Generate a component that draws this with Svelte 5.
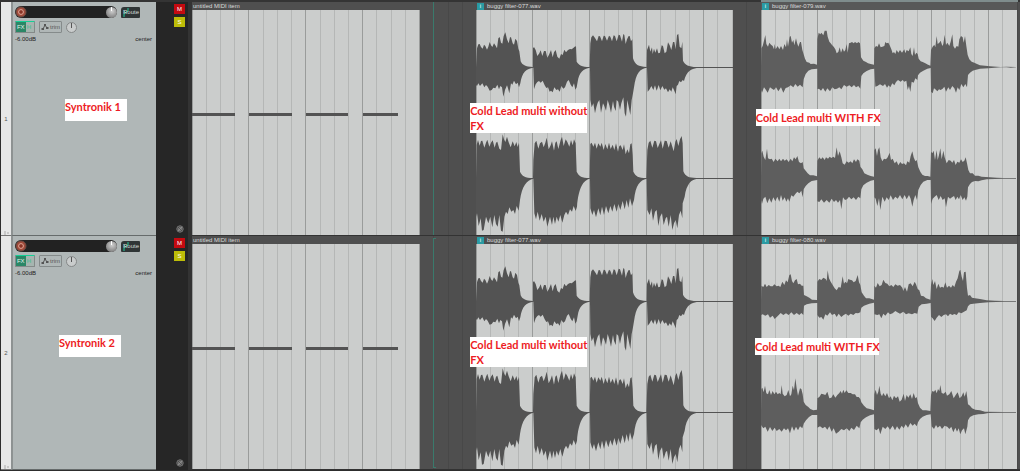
<script>
    // waveform outlines, three units to a pixel: upper edge left to right, then lower edge back
    const dry = {
        view: '138 30 771 675',
        start: 138,
        paths: [
            { shift: 0, d: 'M138 202L141 145 145 133 149 132 153 141 158 146 162 134 166 138 171 149 175 140 179 126 183 136 187 141 192 130 197 137 201 145 205 115 209 111 213 128 217 131 221 108 226 97 231 118 236 130 240 112 243 112 248 130 252 134 256 116 261 123 265 146 268 154 272 184C277 195 285 200 309 201L309 145 312 141 317 150 322 168 328 160 332 151 337 168 342 153 347 153 352 173 357 164 363 150 368 172 372 157 377 150 382 170 388 176 393 162 398 165 403 149 408 157 414 150 420 147 425 148 430 144 434 140 438 139 440 185C447 196 455 200 479 201L481 130 484 112 489 106 495 114 501 124 506 108 510 109 516 124 521 107 525 108 531 122 537 107 541 110 546 124 551 106 555 108 560 124 566 104 570 106 576 125 580 102 583 105 587 132 591 118 596 108 599 108 603 124 607 118 609 175C615 195 625 200 650 201L651 150 657 134 661 155 666 142 668 162 672 146 676 158 681 145 685 160 690 158 695 136 699 138 704 160 709 155 714 127 719 136 724 150 729 126 733 126 737 148 741 105 745 102 749 140 754 145 757 125 759 182C765 195 775 200 800 201L909 201 909 204 800 204C785 207 770 212 762 243L758 240 753 247 748 243 744 254 740 258 737 283 733 272 728 262 724 275 719 268 714 277 708 265 703 269 697 258 691 271 686 255 680 272 675 256 670 270 664 258 659 268 653 275 651 203C630 206 618 218 612 262L609 280 605 300 601 345 597 325 592 300 588 350 584 340 580 292 574 310 570 330 565 305 560 300 557 333 552 320 549 303 543 338 538 316 533 300 528 332 523 318 519 310 513 338 508 300 503 308 499 322 495 340 490 310 485 322 481 300 480 203C460 206 448 215 443 245L440 262 436 269 432 250 427 262 422 254 416 240 411 245 405 262 400 266 394 258 389 275 384 268 379 270 373 262 368 277 363 272 359 275 354 262 349 264 344 256 338 242 332 248 327 243 322 246 317 253 312 268 310 203C290 206 276 215 271 250L267 262 263 248 258 253 252 242 247 254 243 250 238 280 234 265 231 256 225 270 220 290 216 262 211 258 207 268 202 254 196 265 190 263 185 270 179 272 173 260 168 255 163 262 157 250 150 258 145 250 141 258 138 255Z' },
            { shift: 300, d: 'M138 235L140 135 144 120 149 137 153 123 157 122 163 143 168 128 172 119 178 140 183 128 188 121 194 143 198 128 202 125 208 146 213 150 218 103 222 118 226 126 231 110 236 127 242 142 248 124 254 139 259 126 263 141 267 128 270 215C276 228 285 234 309 234L310 180 314 130 319 122 325 146 330 130 336 125 341 142 346 128 350 113 356 148 362 136 366 124 372 152 376 128 380 124 385 147 392 120 396 110 401 138 407 118 412 126 418 140 423 120 428 136 432 118 437 130 440 215C447 229 455 234 479 234L481 132 485 128 490 140 495 128 500 146 505 130 511 140 515 128 521 150 526 132 532 148 537 128 542 147 548 134 553 150 558 130 564 155 568 138 572 136 578 150 582 133 587 163 592 148 597 160 601 133 605 130 608 165 610 215C617 229 625 234 649 234L652 150 656 128 661 122 667 143 673 122 678 124 683 144 688 132 693 121 698 146 704 122 710 123 716 143 722 124 727 140 731 154 736 125 740 117 745 138 750 118 755 108 758 130 760 214C766 229 776 234 799 234L909 234 909 237 799 237C785 239 770 250 764 290L758 310 757 355 752 332 747 345 742 385 737 360 732 370 727 390 722 345 716 380 711 350 707 355 701 375 696 340 690 350 685 378 680 330 675 335 669 362 664 325 659 345 652 330 650 236C630 240 617 255 612 300L606 318 600 295 595 323 590 300 584 328 578 303 571 330 565 312 560 335 553 312 547 335 541 318 535 340 528 318 522 345 516 320 511 346 505 325 498 352 492 330 487 345 481 325 480 236C460 240 446 262 441 320L437 333 431 318 426 335 420 328 414 345 408 335 403 345 397 368 391 345 385 365 380 350 375 372 370 350 366 375 360 350 352 380 347 350 341 365 335 342 329 362 323 335 318 358 313 340 310 236C290 240 276 258 270 300L266 332 260 318 255 342 250 330 244 335 238 322 233 342 228 335 223 350 218 395 213 392 208 345 203 380 198 372 193 345 187 382 181 350 175 370 168 350 161 390 156 392 152 355 146 378 141 340 138 350Z' }
        ]
    }

    const wet79 = {
        view: '63 30 768 675',
        start: 63,
        paths: [
            { shift: 0, d: 'M63 200L64 145 68 138 72 122 76 105 79 132 84 140 88 128 93 134 98 138 102 148 104 132 107 148 113 138 118 148 123 138 129 150 133 132 138 142 141 118 144 140 149 110 152 108 156 128 160 120 163 136 168 115 171 128 175 140 180 126 183 126 187 150 190 160 195 176 200 186 208 188 212 192 222 191 231 194L232 118 236 98 241 103 244 98 250 106 254 92 260 92 263 110 268 125 272 130 276 135 281 140 286 148 290 160 295 156 299 142 303 158 308 145 312 155 316 150 320 132 323 158 327 130 332 128 336 126 341 130 345 126 351 130 355 126 360 130 363 172 370 182 378 186 384 190 392 192 402 194L403 145 408 138 413 140 417 130 422 142 427 140 433 138 436 126 440 130 445 128 449 136 454 148 458 160 462 156 466 162 470 150 475 158 480 150 486 158 493 148 496 160 500 150 506 154 511 142 514 162 518 168 522 142 525 165 529 158 533 162 536 176 542 184 548 186 556 190 564 194 571 197L573 150 578 140 583 134 586 142 590 108 593 132 598 128 602 122 607 138 610 132 614 104 618 135 622 128 628 138 632 125 637 103 640 138 645 146 650 138 655 140 658 118 663 108 668 112 671 128 675 108 679 138 683 165 688 178 695 185 703 188 711 192 720 196 735 197 750 199 770 200 782 201 800 200 828 201L828 202 812 203 800 202 782 202 745 205 720 206 705 210 698 212 690 218 684 225L681 262 676 252 670 262 664 252 658 270 653 262 648 278 643 265 637 258 630 270 625 262 618 275 613 260 608 266 602 270 597 268 592 274 586 268 582 265 578 280 573 275 572 204 562 206 550 212 540 218 534 226L532 240 526 235 521 248 515 245 511 276 507 258 503 270 499 242 493 245 488 240 482 245 474 240 468 246 463 256 457 250 451 262 446 256 441 263 435 252 429 258 420 253 412 258 406 260 403 206 392 208 380 213 370 220 364 228L361 266 355 258 348 262 342 255 335 262 328 256 320 260 312 255 304 268 298 262 291 266 284 268 277 262 270 274 262 265 256 275 249 264 243 272 237 266 232 268L232 206 215 208 205 212 197 222 191 238L188 262 180 254 173 260 166 252 160 262 152 256 144 262 137 264 130 278 123 262 115 274 108 262 102 270 96 266 90 262 83 278 78 270 72 262 66 278 63 270Z' },
            { shift: 300, d: 'M63 234L64 160 67 152 71 170 76 180 81 146 84 175 90 178 95 176 101 186 106 176 113 184 118 176 123 184 129 176 134 182 140 178 146 186 152 176 157 184 162 172 167 178 172 168 177 186 183 190 188 186 191 205 197 212 203 220 210 226 220 226 231 229L232 182 238 172 243 178 248 172 254 180 258 172 264 176 269 170 274 174 280 170 285 174 290 142 294 168 299 154 304 172 308 190 314 194 320 184 326 188 332 184 337 190 342 178 348 186 352 178 358 182 361 200 367 208 373 220 382 224 392 228 402 230L403 150 407 145 411 168 414 150 418 142 422 172 427 184 432 176 438 178 443 172 449 158 453 180 458 176 464 190 470 184 475 196 481 186 486 192 492 190 498 196 502 184 508 188 512 168 517 154 521 172 526 184 530 180 535 202 541 215 547 224 555 228 563 228 571 230L573 155 577 160 581 152 585 180 590 150 593 180 597 165 601 145 605 178 610 152 614 172 620 190 626 180 632 182 637 188 642 180 647 195 652 185 658 188 663 178 668 186 673 182 677 172 681 190 685 210 690 220 698 220 705 227 715 227 725 230 750 232 770 233 790 234 828 234L828 236 790 236 765 237 740 238 725 241 715 244 705 243 696 246 690 252 684 262L682 290 678 302 673 292 668 300 662 285 657 298 652 290 647 300 642 288 636 292 630 296 624 290 618 322 614 295 608 300 602 288 596 300 590 285 584 290 578 296 573 312 572 240 562 240 550 245 542 255 535 270L531 300 526 285 521 300 517 320 512 296 507 285 500 298 494 285 487 298 480 285 473 296 466 290 459 300 452 286 446 300 440 292 434 305 427 290 421 330 417 295 412 318 407 296 403 292 402 240 392 242 380 248 370 256 364 268L361 295 355 290 348 300 341 292 334 298 327 290 321 298 315 300 309 292 304 328 300 300 294 308 288 300 282 306 275 296 268 308 260 300 252 308 244 298 238 306 232 304L232 240 215 243 205 250 197 258 191 268L188 292 184 272 178 280 172 275 166 282 160 290 154 286 148 305 144 295 139 305 134 292 128 302 123 285 118 305 112 290 106 304 100 292 94 308 88 295 82 310 76 290 70 296 66 312 63 300Z' }
        ]
    }

    const wet80 = {
        view: '63 27 768 675',
        start: 63,
        paths: [
            { shift: 0, d: 'M63 198L64 152 70 156 75 146 80 156 86 150 92 154 98 154 103 148 110 154 116 152 121 156 127 140 133 150 138 136 143 142 148 120 152 118 156 138 160 145 165 136 170 132 174 148 180 146 185 152 190 152 192 180 200 184 208 188 216 194 231 195L232 140 238 132 244 135 250 128 257 132 260 138 263 106 267 130 272 140 278 150 284 160 290 166 296 156 302 158 308 124 312 146 316 140 321 145 325 132 330 134 336 136 341 142 347 138 353 120 357 142 361 150 365 172 372 182 378 190 388 190 402 194L403 152 408 158 413 144 419 154 425 150 430 134 436 144 442 146 448 154 454 150 460 156 466 148 473 152 480 150 487 158 490 168 495 156 501 170 506 148 512 145 518 154 524 140 528 148 533 162 538 166 543 182 551 184 558 190 571 194L573 150 577 132 580 150 585 138 590 162 595 146 600 158 606 155 611 158 616 142 621 158 627 152 633 158 638 150 643 156 648 140 653 130 658 108 661 104 665 125 669 138 672 112 677 110 681 160 684 182 690 180 696 188 705 190 720 192 740 196 765 197 793 198 828 198L828 200 793 200 745 202 720 204 700 206 690 208 684 214L680 226 672 230 664 235 656 232 650 240 643 237 637 240 630 236 624 244 618 238 611 240 604 246 597 240 590 248 584 258 578 250 573 245 572 204 560 206 545 208 536 215L532 236 524 234 516 238 506 235 498 238 490 230 480 236 472 232 466 228 458 235 450 238 444 232 436 242 430 236 424 250 418 238 412 240 403 238 402 203 388 206 372 212 364 218L361 232 354 235 347 234 340 240 332 236 325 242 318 236 311 240 304 246 296 236 290 246 284 236 276 240 270 232 262 242 256 238 250 254 244 246 238 248 232 240L232 204 215 205 200 208 192 212L190 240 184 234 178 240 170 234 162 240 154 232 146 240 138 235 130 240 122 234 114 242 104 252 98 242 90 248 84 238 76 242 68 238 63 240Z' },
            { shift: 0, d: 'M63 531L64 462 67 458 71 472 75 452 79 475 84 478 88 465 93 480 98 468 103 478 108 470 113 478 118 474 122 478 125 450 128 476 134 484 140 480 145 465 150 484 154 478 158 452 162 466 166 430 170 460 174 482 180 460 184 462 188 478 191 500 197 510 205 516 211 522 220 526 231 524L232 490 238 486 244 476 250 478 256 480 262 470 268 490 274 488 280 478 286 488 292 480 298 474 302 468 306 476 310 464 314 474 319 466 325 474 332 474 338 478 345 478 350 486 356 486 361 492 364 502 372 512 380 520 390 522 402 526L403 478 407 464 411 480 415 470 418 452 422 476 426 484 430 474 436 484 441 474 447 490 452 484 457 496 462 482 468 490 474 484 479 500 485 494 491 476 495 498 500 480 505 488 511 478 516 492 521 474 526 490 530 486 534 505 540 518 548 526 558 526 571 528L573 480 577 468 582 470 586 464 590 475 594 462 598 468 601 450 605 474 611 476 617 470 621 482 628 478 634 468 641 490 647 480 653 472 659 490 665 484 670 472 674 485 679 468 682 490 684 508 690 512 696 520 706 524 720 526 735 530 793 531 828 531L828 533 793 533 745 534 730 537 715 538 700 541 690 546 684 556L682 575 676 598 672 580 666 586 661 598 656 580 651 590 646 578 640 592 634 575 628 582 622 575 614 572 606 582 600 572 593 578 588 570 582 582 575 574 572 538 560 540 548 545 540 552 534 562L530 574 524 566 518 572 511 564 504 578 497 568 491 580 485 572 478 584 471 574 465 586 458 572 450 584 443 574 436 582 428 575 421 598 416 580 410 586 403 582 402 538 390 541 378 547 368 554 362 562L358 580 350 572 342 585 334 578 328 588 320 580 312 586 304 582 296 590 288 596 281 580 275 590 268 574 262 584 255 575 248 580 240 574 232 578L232 540 216 540 207 546 198 556 191 566L187 580 180 574 174 586 168 575 162 588 156 574 150 595 144 580 138 586 132 580 125 590 118 582 110 588 104 578 97 588 90 576 83 590 76 575 70 580 63 570Z' }
        ]
    }

    const midi = [[0, 43], [57, 43], [114, 42], [171, 35]]

    // one beat of the arrange grid, in pixels of an 828 wide timeline
    const beat = 14.225

    const tracks = [
        { id: 1, name: 'Syntronik 1', dryFile: 'buggy filter-077.wav', wetFile: 'buggy filter-079.wav', wet: wet79 },
        { id: 2, name: 'Syntronik 2', dryFile: 'buggy filter-077.wav', wetFile: 'buggy filter-080.wav', wet: wet80 }
    ]

    let mix = $state([
        { mute: true, solo: true, volume: 100, pan: 50 },
        { mute: true, solo: true, volume: 100, pan: 50 }
    ])
</script>

{#snippet grid(count, start, step, height)}
    {#each { length: count } as _, i}
        <line class={i % 4 ? 'beat' : 'bar'} x1={start + i * step} x2={start + i * step} y1="0" y2={height} />
    {/each}
{/snippet}

{#snippet audio(file, wave, kind)}
    <section class="item {kind}">
        <header><i>i</i><span>{file}</span></header>
        <svg class="body" viewBox={wave.view} preserveAspectRatio="none">
            {@render grid(19, wave.start, beat * 3, 705)}
            {#each wave.paths as p}
                <path d={p.d} transform="translate(0 {p.shift})" />
            {/each}
        </svg>
    </section>
{/snippet}

<main>
    <div class="ruler"><div class="loop"></div></div>
    {#each tracks as track, n}
        <div class="track t{track.id}">
            <div class="number">
                <span>{track.id}</span>
                <svg width="5" height="4" viewBox="0 0 5 4"><path d="M0 1h2M0 3h2M3 2h2" stroke="#a8a8a8" fill="none" /></svg>
            </div>
            <div class="panel">
                <div class="row">
                    <div class="fader">
                        <button class="rec" aria-label="Record arm">
                            <svg width="12" height="12" viewBox="0 0 12 12">
                                <circle cx="6" cy="6" r="5" fill="#a04a3a" stroke="#6b4a42" />
                                <circle cx="6" cy="6" r="2.4" fill="#8a3426" stroke="#e0a898" />
                            </svg>
                        </button>
                        <input type="range" aria-label="Volume" bind:value={mix[n].volume}>
                    </div>
                    <button class="route">
                        <svg width="7" height="11" viewBox="0 0 7 11"><path d="M1 10V7l4-3V1M3 6L1 4" fill="none" stroke="#1fc79b" /></svg>
                        <span>Route</span>
                    </button>
                </div>
                <div class="row second">
                    <button class="fx"><b>FX</b><svg width="9" height="10" viewBox="0 0 9 10"><path d="M3 3v4M6 3v4M3 5h3" stroke="#62bb9d" fill="none" /></svg></button>
                    <button class="trim"><svg width="8" height="8" viewBox="0 0 8 8"><path d="M0 6h2l2-4 2 3h2" fill="none" stroke="#555" /><path d="M1 5h2v2H1zM3 1h2v2H3zM5 4h2v2H5z" fill="#555" /></svg>trim</button>
                    <input class="knob" type="range" aria-label="Pan" bind:value={mix[n].pan}>
                </div>
                <div class="values"><span>-6.00dB</span><span>center</span></div>
                <div class="note name">{track.name}</div>
            </div>
            <div class="side">
                <button class="m" aria-pressed={mix[n].mute} onclick={() => mix[n].mute = !mix[n].mute}>M</button>
                <button class="s" aria-pressed={mix[n].solo} onclick={() => mix[n].solo = !mix[n].solo}>S</button>
                <button class="phase" aria-label="Phase">
                    <svg width="8" height="8" viewBox="0 0 8 8"><circle cx="4" cy="4" r="3.2" fill="#444" stroke="#777" /><circle cx="4" cy="4" r="1.5" fill="none" stroke="#999" stroke-width=".7" /><path d="M2 6l4-4" stroke="#999" stroke-width=".8" /></svg>
                </button>
            </div>
            <div class="lane">
                <svg class="back" viewBox="0 0 828 234" preserveAspectRatio="none">
                    {@render grid(59, 0, beat, 234)}
                </svg>
                <section class="item midi">
                    <header><span>untitled MIDI item</span></header>
                    <svg class="body" viewBox="0 0 228 225" preserveAspectRatio="none">
                        {@render grid(17, 0, beat, 225)}
                        {#each midi as [x, w]}
                            <rect {x} y="103" width={w} height="3" />
                        {/each}
                    </svg>
                </section>
                {@render audio(track.dryFile, dry, 'dry')}
                {@render audio(track.wetFile, track.wet, 'wet')}
                <div class="cursor"></div>
                <div class="note without">Cold Lead multi without<br>FX</div>
                <div class="note with">Cold Lead multi WITH FX</div>
            </div>
        </div>
    {/each}
</main>

<style>
    :global(body){
        margin: 0;
        background-color: #2d2d2d;
    }
    main{
        font-family: "Liberation Sans", sans-serif;
        font-size: 6px;
        line-height: 8px;
        background-color: #2d2d2d;
        padding-bottom: 1px;
    }
    button{
        padding: 0;
        border: 0;
        font: inherit;
        cursor: pointer;
    }
    svg{
        display: block;
    }
    .ruler{
        height: 2px;
        padding-left: 192px;
        background-color: #343434;
        .loop{
            height: 2px;
            width: 31%;
            margin-left: 68.7%;
            background-color: #7f8c8c;
        }
    }
    .track{
        display: flex;
        height: 234px;
        padding-left: 1px;
    }
    .number{
        width: 10px;
        flex: none;
        box-sizing: border-box;
        display: grid;
        grid-template-rows: 1fr auto 1fr;
        justify-items: center;
        color: #555;
        background-color: #e6e7e7;
        border-bottom: 1px solid #777;
        span{
            grid-row: 2;
        }
        svg{
            grid-row: 3;
            align-self: end;
        }
    }
    .panel{
        width: 145px;
        flex: none;
        box-sizing: border-box;
        position: relative;
        padding: 4px 4px 0 2px;
        border-left: 2px solid #8d9292;
        border-bottom: 1px solid #666b6b;
        background-color: #b0b7b7;
        color: #222;
    }
    .row{
        display: flex;
        align-items: center;
        gap: 4px;
    }
    .second{
        margin-top: 3px;
    }
    .fader{
        display: flex;
        align-items: center;
        width: 102px;
        height: 12px;
        border-radius: 6px;
        background-color: #222;
        .rec{
            background: none;
        }
        input{
            flex: 1;
            min-width: 0;
        }
    }
    input{
        appearance: none;
        margin: 0;
        height: 12px;
        background: transparent;
        &::-webkit-slider-thumb{
            appearance: none;
            width: 11px;
            height: 11px;
            border-radius: 50%;
            background: linear-gradient(to bottom, #fff 0 4px, transparent 4px) center / 1px 100% no-repeat, radial-gradient(circle at 6px 4px, #d0d0d0, #666);
        }
    }
    .route{
        display: flex;
        align-items: center;
        width: 19px;
        height: 11px;
        border-radius: 3px 1px 1px 1px;
        background-color: #2f3536;
        color: #d5dada;
        svg{
            margin-left: 2px;
        }
        span{
            margin-left: -7px;
        }
    }
    .fx{
        display: flex;
        align-items: center;
        width: 20px;
        height: 12px;
        box-sizing: border-box;
        border: 1px solid #848a89;
        border-top-color: #15cf96;
        border-radius: 1px;
        background: linear-gradient(to right, #2b8767 10px, #a6b5b0 10px);
        color: #e3f0eb;
        b{
            width: 10px;
            font-weight: normal;
        }
    }
    .trim{
        display: flex;
        align-items: center;
        justify-content: center;
        gap: 1px;
        width: 23px;
        height: 12px;
        box-sizing: border-box;
        border: 1px solid #858b8b;
        border-radius: 1px;
        background-color: #b0b7b7;
        color: #555;
    }
    .knob{
        width: 11px;
        height: 11px;
        box-sizing: border-box;
        border: 1px solid #858888;
        border-radius: 50%;
        background-color: #c9cccc;
        &::-webkit-slider-thumb{
            width: 1px;
            height: 5px;
            margin-bottom: 3px;
            border-radius: 0;
            background: #555;
        }
    }
    .values{
        display: flex;
        justify-content: space-between;
        margin-top: 2px;
    }
    .side{
        width: 36px;
        flex: none;
        box-sizing: border-box;
        display: flex;
        flex-direction: column;
        align-items: flex-end;
        gap: 3px;
        padding: 2px 3px 3px 0;
        border-right: 4px solid #333;
        background-color: #262626;
        .m, .s{
            width: 11px;
            height: 10px;
            background-color: #c40a10;
            color: #fff;
        }
        .s{
            background-color: #bdbd08;
        }
        .phase{
            margin-top: auto;
            margin-right: 1px;
            background: none;
        }
    }
    .track .side{
        width: 36px;
        border-right-width: 0;
        box-shadow: inset -4px 0 #333;
        padding-right: 7px;
    }
    .lane{
        flex: 1;
        min-width: 0;
        position: relative;
        display: grid;
        grid-template-columns: 228fr 56fr 257fr 28fr 256fr 3fr;
        background-color: #4f4f4f;
        border-bottom: 1px solid #333;
        box-sizing: border-box;
    }
    .back{
        position: absolute;
        width: 100%;
        height: 100%;
    }
    line{
        stroke-width: 1px;
        vector-effect: non-scaling-stroke;
        shape-rendering: crispEdges;
    }
    .back .beat{
        stroke: #484848;
    }
    .back .bar{
        stroke: #3c3c3c;
    }
    .item{
        position: relative;
        display: flex;
        flex-direction: column;
        min-width: 0;
        header{
            display: flex;
            align-items: center;
            gap: 3px;
            height: 8px;
            padding-left: 1px;
            background-color: #4f4f4f;
            color: #dcdcdc;
            white-space: nowrap;
        }
        i{
            width: 7px;
            height: 7px;
            line-height: 7px;
            text-align: center;
            font-style: normal;
            background-color: #2a9ba3;
            color: #fff;
        }
        .body{
            width: 100%;
            flex: 1;
            min-height: 0;
            background-color: #cbcdcc;
            fill: #535353;
        }
        .beat{
            stroke: #b5b7b6;
        }
        .bar{
            stroke: #9a9c9b;
        }
    }
    .midi{
        grid-column: 1;
    }
    .dry{
        grid-column: 3;
    }
    .wet{
        grid-column: 5;
        header{
            background-color: #585858;
        }
        .body{
            background-color: #cfd1d0;
            fill: #5e5e5e;
        }
    }
    .cursor{
        position: absolute;
        top: 0;
        bottom: 0;
        left: 29.1%;
        border-left: 1px solid #3a7a6c;
    }
    .t2 .cursor{
        top: 2px;
        bottom: 1px;
        width: 2px;
        border-top: 1px solid #3a7a6c;
        border-bottom: 1px solid #3a7a6c;
    }
    .note{
        position: absolute;
        box-sizing: border-box;
        background-color: #fff;
        color: #ed1c24;
        font-family: Lato, sans-serif;
        font-size: 11px;
        font-weight: bold;
        line-height: 15px;
        white-space: nowrap;
    }
    .name{
        top: 97px;
        left: 52px;
        width: 62px;
        height: 22px;
    }
    .t2 .name{
        top: 99px;
        left: 46px;
    }
    .without{
        top: 101px;
        left: 33.6%;
        width: 117px;
    }
    .with{
        top: 107px;
        left: 68.1%;
        width: 124px;
        padding: 1px 0;
    }
    .t2 .with{
        top: 102px;
        left: 68%;
    }
</style>
